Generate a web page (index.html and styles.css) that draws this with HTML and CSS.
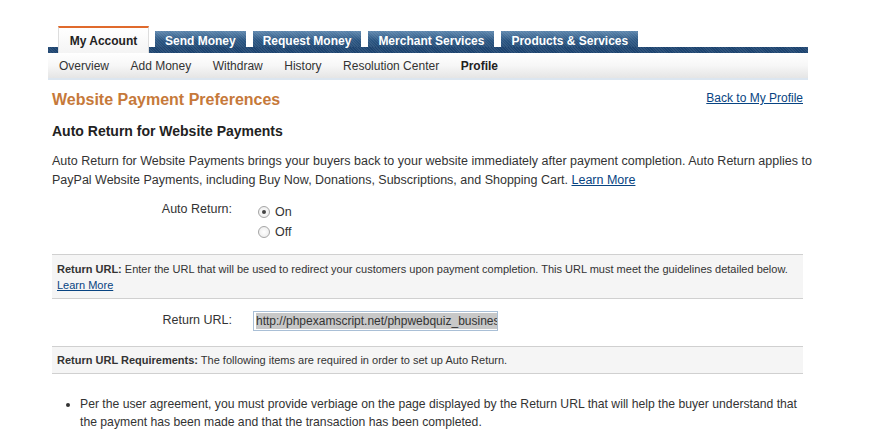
FILE: index.html
```html
<!DOCTYPE html>
<html>
<head>
<meta charset="utf-8">
<link rel="stylesheet" href="styles.css">
</head>
<body>
<div class="page">
  <div class="nav">
    <div class="tabs">
      <div class="tab active">My Account</div>
      <div class="tab">Send Money</div>
      <div class="tab">Request Money</div>
      <div class="tab">Merchant Services</div>
      <div class="tab">Products &amp; Services</div>
    </div>
    <div class="strip"></div>
    <div class="subnav">
      <span>Overview</span>
      <span>Add Money</span>
      <span>Withdraw</span>
      <span>History</span>
      <span>Resolution Center</span>
      <span class="cur">Profile</span>
    </div>
  </div>
  <div class="content">
    <div class="head">
      <h1 class="title">Website Payment Preferences</h1>
      <a class="link back" href="#">Back to My Profile</a>
    </div>
    <h2 class="sub">Auto Return for Website Payments</h2>
    <p class="intro">Auto Return for Website Payments brings your buyers back to your website immediately after payment completion. Auto Return applies to PayPal Website Payments, including Buy Now, Donations, Subscriptions, and Shopping Cart. <a class="link" href="#">Learn More</a></p>
    <div class="row radios-row">
      <div class="label">Auto Return:</div>
      <div class="radios">
        <label class="radio"><span class="dot on"></span>On</label>
        <label class="radio"><span class="dot"></span>Off</label>
      </div>
    </div>
    <div class="box">
      <b>Return URL:</b> Enter the URL that will be used to redirect your customers upon payment completion. This URL must meet the guidelines detailed below.<br><a class="link" href="#">Learn More</a>
    </div>
    <div class="row url-row">
      <div class="label">Return URL:</div>
      <div class="input"><span class="sel">http://phpexamscript.net/phpwebquiz_busines</span></div>
    </div>
    <div class="box box2">
      <b>Return URL Requirements:</b> The following items are required in order to set up Auto Return.
    </div>
    <ul class="list">
      <li>Per the user agreement, you must provide verbiage on the page displayed by the Return URL that will help the buyer understand that the payment has been made and that the transaction has been completed.</li>
    </ul>
  </div>
</div>
</body>
</html>
```

FILE: styles.css
```css
* { box-sizing: border-box; }
html, body { margin: 0; padding: 0; background: #fff; }
body {
  font-family: "Liberation Sans", Arial, sans-serif;
  color: #333;
  font-size: 12.5px;
}
.page { width: 760px; margin-left: 48px; padding-top: 26px; }
.nav { position: relative; }
.tabs { display: flex; align-items: flex-end; height: 21px; padding-left: 10px; gap: 7px; }
.tab {
  height: 16px;
  padding: 0 10px;
  color: #fff;
  font-weight: bold;
  font-size: 12px;
  line-height: 21px;
  background-color: #2f5f8c;
  background-image:
    repeating-linear-gradient(45deg, rgba(255,255,255,0.08) 0 1px, transparent 1px 2px),
    linear-gradient(#5d86ad, #2b5682 60%, #234b76);
  white-space: nowrap;
}
.tab.active {
  height: 27px;
  margin-bottom: -6px;
  position: relative;
  z-index: 2;
  color: #222;
  background: linear-gradient(#fff, #f4f4f4);
  border-top: 2px solid #e06a2c;
  border-left: 1px solid #ddd;
  border-right: 1px solid #ddd;
  padding: 0;
  text-align: center;
  line-height: 26px;
  width: 91px;
  margin-right: -1px;
}
.strip {
  height: 6px;
  background-color: #1d4470;
  background-image: repeating-linear-gradient(45deg, rgba(255,255,255,0.08) 0 1px, transparent 1px 2px);
}
.subnav {
  height: 27px;
  display: flex;
  align-items: center;
  padding-left: 11px;
  font-size: 12px;
  color: #333;
  background: linear-gradient(#ffffff, #f7f7f7 50%, #e5e5e5);
  border-bottom: 2px solid #dce6f0;
}
.subnav span { margin-right: 21.5px; }
.subnav .cur { font-weight: bold; color: #222; }
.content { padding: 0 5px 0 4px; }
.head { display: flex; justify-content: space-between; align-items: baseline; margin-top: 10px; }
.title { margin: 0; font-size: 16px; color: #c6793a; font-weight: bold; line-height: 20px; }
.link { color: #084482; text-decoration: underline; }
.back { font-size: 12px; position: relative; top: -3px; }
.sub { margin: 12px 0 0; font-size: 14px; font-weight: bold; color: #222; line-height: 18px; }
.intro { margin: 12px -14px 0 0; line-height: 19px; color: #333; }
.row { display: flex; }
.label { width: 180px; text-align: right; flex: none; }
.radios-row { margin-top: 12px; }
.radios-row .label { line-height: 15px; }
.radios { display: flex; flex-direction: column; gap: 2px; margin-left: 26px; }
.radio { display: flex; align-items: center; gap: 5px; line-height: 16px; padding-top: 2px; }
.dot {
  width: 12px; height: 12px; border-radius: 50%;
  border: 1px solid #a6a6a6;
  background: radial-gradient(#fff, #e8e8e8);
  position: relative;
  display: inline-block;
}
.dot.on::after {
  content: ""; position: absolute; left: 3px; top: 3px; width: 4px; height: 4px; border-radius: 50%; background: #444;
}
.box {
  margin-top: 14px;
  background: #f5f5f5;
  border-top: 1px solid #d0d0d0;
  border-bottom: 1px solid #d0d0d0;
  font-size: 11px;
  line-height: 16px;
  padding: 6px 5px 5px 5px;
  color: #333;
}
.url-row { margin-top: 12px; align-items: flex-start; }
.url-row .label { line-height: 16px; margin-top: 1px; }
.input {
  margin-left: 21px;
  width: 245px; height: 20px;
  border: 1px solid #a9bfd6;
  padding: 1px 2px;
  overflow: hidden;
  white-space: nowrap;
  background: #fff;
}
.sel { background: #c8c8c8; color: #333; font-size: 12px; line-height: 16px; display: inline-block; }
.box2 { margin-top: 15px; padding: 5px 5px 5px; }
.list { margin: 21px 0 0; padding-left: 28px; line-height: 18px; font-size: 12.2px; }
```
